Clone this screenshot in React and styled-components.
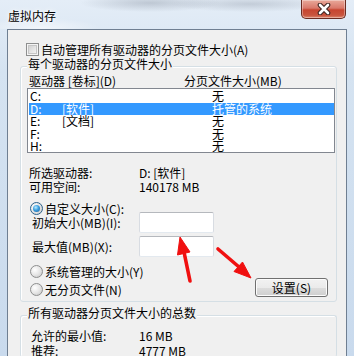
import styled, { createGlobalStyle } from "styled-components";

const FONT = `"Noto Sans CJK SC", "Noto Sans", sans-serif`;

const GlobalStyle = createGlobalStyle`
  html, body { margin: 0; padding: 0; }
  body { background: #d6e3f1; font-family: ${FONT}; }
`;

const Window = styled.div`
  position: relative;
  width: 354px;
  height: 356px;
  overflow: hidden;
  display: flex;
  flex-direction: column;
  font-size: 12px;
  color: #000;
  background: linear-gradient(180deg, #e4edf7 0%, #d5e3f1 20%, #c9daed 100%);
`;

const TitleBar = styled.div`
  display: flex;
  justify-content: space-between;
  align-items: flex-start;
  height: 29px;
  padding-left: 8px;
  flex-shrink: 0;
  background:
    radial-gradient(ellipse 70px 9px at 150px 3px, rgba(120, 130, 145, 0.35), transparent),
    radial-gradient(ellipse 80px 8px at 250px 4px, rgba(120, 130, 145, 0.3), transparent),
    radial-gradient(ellipse 60px 10px at 40px 28px, rgba(255, 255, 255, 0.6), transparent);
`;

const Title = styled.span`
  margin-top: 10px;
  line-height: 12px;
  text-shadow: 0 0 6px #fff, 0 0 3px #fff;
`;

const CloseButton = styled.div`
  width: 45px;
  height: 19px;
  margin-right: 8px;
  box-sizing: border-box;
  display: flex;
  align-items: center;
  justify-content: center;
  border: 1px solid #6b2c22;
  border-top: none;
  border-radius: 0 0 5px 5px;
  background: linear-gradient(180deg, #e9a99a 0%, #d9796b 45%, #c74530 55%, #c9553e 85%, #de8a70 100%);
  box-shadow: inset 0 0 0 1px rgba(255, 255, 255, 0.35);
`;

const Client = styled.div`
  flex: 1;
  width: 340px;
  margin-left: 7px;
  box-sizing: border-box;
  display: flex;
  flex-direction: column;
  background: #f0f0f0;
  border: 1px solid #6f7f92;
  border-bottom: none;
`;

const CheckRow = styled.label`
  display: flex;
  align-items: center;
  gap: 2px;
  height: 13px;
  margin: 13px 0 0 18px;
  line-height: 12px;
`;

const CheckBox = styled.span`
  width: 13px;
  height: 13px;
  box-sizing: border-box;
  border: 1px solid #8e8f8f;
  background: #f4f4f4;
  box-shadow: inset 0 0 0 1px #f4f4f4, inset 0 0 0 2px #c6c6c6;
  background-image: linear-gradient(135deg, #c9c9c9 0%, #f2f2f2 80%);
  background-clip: content-box;
  padding: 2px;
`;

const Group = styled.div`
  display: flex;
  flex-direction: column;
  margin: ${(p) => p.$top}px 9px 0 12px;
  padding-bottom: ${(p) => p.$bottom || 0}px;
  border: 1px solid #d5dfe5;
  border-radius: 3px;
  box-shadow: inset 1px 1px 0 #fff;
  ${(p) => p.$open && "border-bottom: none; flex: 1;"}
`;

const GroupTitle = styled.span`
  align-self: flex-start;
  margin: -9px 0 0 6px;
  padding: 0 1px;
  line-height: 12px;
  background: #f0f0f0;
`;

const ColumnHeader = styled.div`
  display: flex;
  margin-top: 5px;
  padding-left: 8px;
  line-height: 12px;
  span:first-child {
    width: 155px;
  }
`;

const ListBox = styled.div`
  height: 65px;
  margin: 1px 1px 0 6px;
  padding-top: 1px;
  box-sizing: border-box;
  overflow: hidden;
  background: #fff;
  border: 1px solid #828790;
`;

const Row = styled.div`
  display: flex;
  height: 12.5px;
  line-height: 12.5px;
  margin-left: 1px;
  padding-left: 1px;
  background: ${(p) => (p.$selected ? "#3399ff" : "transparent")};
  color: ${(p) => (p.$selected ? "#fff" : "#000")};
`;

const Cell = styled.span`
  width: ${(p) => p.$w}px;
  flex-shrink: 0;
  white-space: nowrap;
`;

const InfoGrid = styled.div`
  display: grid;
  grid-template-columns: ${(p) => p.$label}px auto;
  row-gap: ${(p) => p.$gap}px;
  margin-top: ${(p) => p.$top}px;
  padding-left: ${(p) => p.$left}px;
  line-height: 12px;
`;

const RadioRow = styled.label`
  display: flex;
  align-items: center;
  gap: 2px;
  height: 13px;
  margin-top: ${(p) => p.$top || 0}px;
  padding-left: ${(p) => p.$left ?? 9}px;
  line-height: 12px;
`;

const Radio = styled.span`
  position: relative;
  width: 13px;
  height: 13px;
  box-sizing: border-box;
  border-radius: 50%;
  border: 1px solid ${(p) => (p.$checked ? "#2c628b" : "#8e8f8f")};
  background: radial-gradient(circle at 35% 35%, #ffffff 0%, #e6e6e6 50%, #c2c2c2 100%);
  &::after {
    content: "";
    display: ${(p) => (p.$checked ? "block" : "none")};
    position: absolute;
    left: 2px;
    top: 2px;
    width: 7px;
    height: 7px;
    border-radius: 50%;
    background: radial-gradient(circle at 40% 35%, #b9ecff 0%, #3b9fe0 45%, #1a5a93 100%);
  }
`;

const FieldRow = styled.div`
  display: flex;
  align-items: center;
  margin-top: ${(p) => p.$top}px;
  padding-left: 11px;
  line-height: 12px;
`;

const FieldLabel = styled.span`
  width: 107px;
`;

const Input = styled.div`
  width: 75px;
  height: 21px;
  box-sizing: border-box;
  background: #fff;
  border: 1px solid;
  border-color: #b5b8bd #d8dce2 #e3e9ef #d8dce2;
  border-radius: 2px;
`;

const ActionRow = styled.div`
  display: flex;
  justify-content: space-between;
  align-items: flex-start;
  padding-right: 8px;
  ${RadioRow} {
    margin-top: 5px;
  }
`;

const Button = styled.button`
  width: 73px;
  height: 19px;
  padding: 0;
  font-family: ${FONT};
  font-size: 12px;
  line-height: 12px;
  color: #000;
  border: 1px solid #707070;
  border-radius: 3px;
  background: linear-gradient(180deg, #f2f2f2 0%, #ebebeb 50%, #dddddd 51%, #cfcfcf 100%);
  box-shadow: inset 0 0 0 1px #fcfcfc;
`;

const Overlay = styled.svg`
  position: absolute;
  left: 0;
  top: 0;
  pointer-events: none;
`;

const drives = [
  { d: "C:", label: "", size: "无" },
  { d: "D:", label: "[软件]", size: "托管的系统", selected: true },
  { d: "E:", label: "[文档]", size: "无" },
  { d: "F:", label: "", size: "无" },
  { d: "H:", label: "", size: "无" },
];

export default function App() {
  return (
    <>
      <GlobalStyle />
      <Window>
        <TitleBar>
          <Title>虚拟内存</Title>
          <CloseButton>
            <svg width="14" height="12" viewBox="0 0 14 12">
              <path d="M3 2 L11 10 M11 2 L3 10" stroke="#3d2420" strokeWidth="4.6" strokeLinecap="round" />
              <path d="M3 2 L11 10 M11 2 L3 10" stroke="#fff" strokeWidth="2.6" strokeLinecap="round" />
            </svg>
          </CloseButton>
        </TitleBar>

        <Client>
          <CheckRow>
            <CheckBox />
            <span>自动管理所有驱动器的分页文件大小(A)</span>
          </CheckRow>

          <Group $top={10} $bottom={4}>
            <GroupTitle>每个驱动器的分页文件大小</GroupTitle>
            <ColumnHeader>
              <span>驱动器 [卷标](D)</span>
              <span>分页文件大小(MB)</span>
            </ColumnHeader>
            <ListBox>
              {drives.map((r) => (
                <Row key={r.d} $selected={r.selected}>
                  <Cell $w={32}>{r.d}</Cell>
                  <Cell $w={150}>{r.label}</Cell>
                  <Cell>{r.size}</Cell>
                </Row>
              ))}
            </ListBox>

            <InfoGrid $top={14} $left={8} $label={110} $gap={2}>
              <span>所选驱动器:</span>
              <span>D:  [软件]</span>
              <span>可用空间:</span>
              <span>140178 MB</span>
            </InfoGrid>

            <RadioRow $top={9}>
              <Radio $checked />
              <span>自定义大小(C):</span>
            </RadioRow>
            <FieldRow $top={-3}>
              <FieldLabel>初始大小(MB)(I):</FieldLabel>
              <Input />
            </FieldRow>
            <FieldRow $top={3}>
              <FieldLabel>最大值(MB)(X):</FieldLabel>
              <Input />
            </FieldRow>
            <RadioRow $top={8}>
              <Radio />
              <span>系统管理的大小(Y)</span>
            </RadioRow>
            <ActionRow>
              <RadioRow>
                <Radio />
                <span>无分页文件(N)</span>
              </RadioRow>
              <Button>设置(S)</Button>
            </ActionRow>
          </Group>

          <Group $top={13} $open>
            <GroupTitle>所有驱动器分页文件大小的总数</GroupTitle>
            <InfoGrid $top={11} $left={10} $label={108} $gap={3}>
              <span>允许的最小值:</span>
              <span>16 MB</span>
              <span>推荐:</span>
              <span>4777 MB</span>
            </InfoGrid>
          </Group>
        </Client>

        <Overlay width="354" height="356" viewBox="0 0 354 356">
          <g fill="#f01010" stroke="#f01010" strokeLinejoin="round">
            <line x1="190" y1="281" x2="184" y2="252" strokeWidth="3.6" strokeLinecap="round" />
            <polygon points="180,237 190,252 177.5,255" strokeWidth="1" />
            <line x1="218" y1="249" x2="239" y2="267" strokeWidth="3.6" strokeLinecap="round" />
            <polygon points="251,278 234,271.5 242.5,262" strokeWidth="1" />
          </g>
        </Overlay>
      </Window>
    </>
  );
}
